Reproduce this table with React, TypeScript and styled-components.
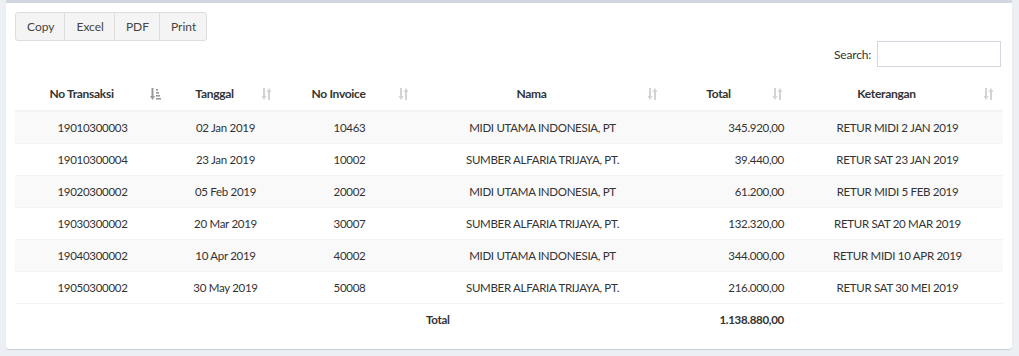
import React from "react";
import styled, { createGlobalStyle } from "styled-components";

const Global = createGlobalStyle`
  html, body { margin: 0; padding: 0; background: #ecf0f5; }
  body { font-family: Lato, "Open Sans", sans-serif; color: #333; }
  * { box-sizing: border-box; }
`;

const Page = styled.div`
  padding: 0 7px 0 6px;
  height: 356px;
`;

const Card = styled.div`
  background: #fff;
  border-top: 3px solid #d2d6de;
  border-radius: 0 0 3px 3px;
  box-shadow: 0 1px 1px rgba(0, 0, 0, 0.15);
  padding: 9px 9px 10px 9px;
  height: 349px;
`;

const Toolbar = styled.div`
  display: flex;
`;

const ToolButton = styled.button<{ $first?: boolean; $last?: boolean }>`
  font-family: inherit;
  font-size: 12px;
  color: #444;
  background: #f4f4f4;
  border: 1px solid #ddd;
  margin-left: ${(p) => (p.$first ? 0 : -1)}px;
  height: 29px;
  padding: 0 10px 0 11px;
  border-radius: ${(p) =>
    p.$first ? "3px 0 0 3px" : p.$last ? "0 3px 3px 0" : "0"};
`;

const SearchRow = styled.div`
  display: flex;
  justify-content: flex-end;
  align-items: center;
  gap: 6px;
  padding-right: 2px;
  font-size: 12px;
  letter-spacing: -0.2px;
  color: #333;
`;

const SearchInput = styled.input`
  width: 124px;
  height: 26px;
  border: 1px solid #d2d6de;
  outline: none;
`;

const Table = styled.table`
  width: 988px;
  border-collapse: collapse;
  margin-top: 12px;
  font-size: 11.5px;
  letter-spacing: -0.3px;
  table-layout: fixed;
`;

const HeadCell = styled.th`
  position: relative;
  height: 32px;
  padding: 0 30px 2px 8px;
  text-align: center;
  font-weight: 700;
  font-size: 12px;
  color: #333;
  border-bottom: 2px solid #f4f4f4;
`;

const SortIcon = styled.span`
  position: absolute;
  right: 9px;
  top: 9px;
  display: flex;
`;

const Row = styled.tr<{ $striped?: boolean }>`
  background: ${(p) => (p.$striped ? "#f9f9f9" : "#fff")};
  & > td { border-top: 1px solid #f4f4f4; }
`;

const Cell = styled.td<{ $align?: string; $bold?: boolean }>`
  height: 32px;
  padding: 0 8px;
  text-align: ${(p) => p.$align || "center"};
  font-weight: ${(p) => (p.$bold ? 700 : 400)};
  color: #333;
  white-space: nowrap;
`;

const Both = () => (
  <svg width="11" height="12" viewBox="0 0 11 12">
    <g fill="#d3d3d3">
      <rect x="2" y="0" width="2" height="9" />
      <polygon points="0.5,8 5.5,8 3,12" />
      <rect x="7" y="3" width="2" height="9" />
      <polygon points="5.5,4 10.5,4 8,0" />
    </g>
  </svg>
);

const Asc = () => (
  <svg width="11" height="12" viewBox="0 0 11 12">
    <g fill="#9a9a9a">
      <rect x="1.5" y="0" width="2" height="9" />
      <polygon points="0,8 5,8 2.5,12" />
      <rect x="6" y="1" width="2" height="1.6" />
      <rect x="6" y="4" width="3" height="1.6" />
      <rect x="6" y="7" width="4" height="1.6" />
      <rect x="6" y="10" width="5" height="1.6" />
    </g>
  </svg>
);

const columns = [
  { label: "No Transaksi", width: 155 },
  { label: "Tanggal", width: 111 },
  { label: "No Invoice", width: 137 },
  { label: "Nama", width: 249 },
  { label: "Total", width: 125 },
  { label: "Keterangan", width: 211 },
];

const rows = [
  ["19010300003", "02 Jan 2019", "10463", "MIDI UTAMA INDONESIA, PT", "345.920,00", "RETUR MIDI 2 JAN 2019"],
  ["19010300004", "23 Jan 2019", "10002", "SUMBER ALFARIA TRIJAYA, PT.", "39.440,00", "RETUR SAT 23 JAN 2019"],
  ["19020300002", "05 Feb 2019", "20002", "MIDI UTAMA INDONESIA, PT", "61.200,00", "RETUR MIDI 5 FEB 2019"],
  ["19030300002", "20 Mar 2019", "30007", "SUMBER ALFARIA TRIJAYA, PT.", "132.320,00", "RETUR SAT 20 MAR 2019"],
  ["19040300002", "10 Apr 2019", "40002", "MIDI UTAMA INDONESIA, PT", "344.000,00", "RETUR MIDI 10 APR 2019"],
  ["19050300002", "30 May 2019", "50008", "SUMBER ALFARIA TRIJAYA, PT.", "216.000,00", "RETUR SAT 30 MEI 2019"],
];

export default function App() {
  return (
    <Page>
      <Global />
      <Card>
        <Toolbar>
          <ToolButton $first>Copy</ToolButton>
          <ToolButton>Excel</ToolButton>
          <ToolButton>PDF</ToolButton>
          <ToolButton $last>Print</ToolButton>
        </Toolbar>
        <SearchRow>
          <span>Search:</span>
          <SearchInput type="search" />
        </SearchRow>
        <Table>
          <colgroup>
            {columns.map((c) => (
              <col key={c.label} style={{ width: c.width }} />
            ))}
          </colgroup>
          <thead>
            <tr>
              {columns.map((c, i) => (
                <HeadCell key={c.label}>
                  {c.label}
                  <SortIcon>{i === 0 ? <Asc /> : <Both />}</SortIcon>
                </HeadCell>
              ))}
            </tr>
          </thead>
          <tbody>
            {rows.map((r, i) => (
              <Row key={r[0]} $striped={i % 2 === 0}>
                {r.map((v, j) => (
                  <Cell key={j} $align={j === 4 ? "right" : "center"}>
                    {v}
                  </Cell>
                ))}
              </Row>
            ))}
          </tbody>
          <tfoot>
            <Row>
              <Cell />
              <Cell />
              <Cell />
              <Cell $align="left" $bold>Total</Cell>
              <Cell $align="right" $bold>1.138.880,00</Cell>
              <Cell />
            </Row>
          </tfoot>
        </Table>
      </Card>
    </Page>
  );
}
